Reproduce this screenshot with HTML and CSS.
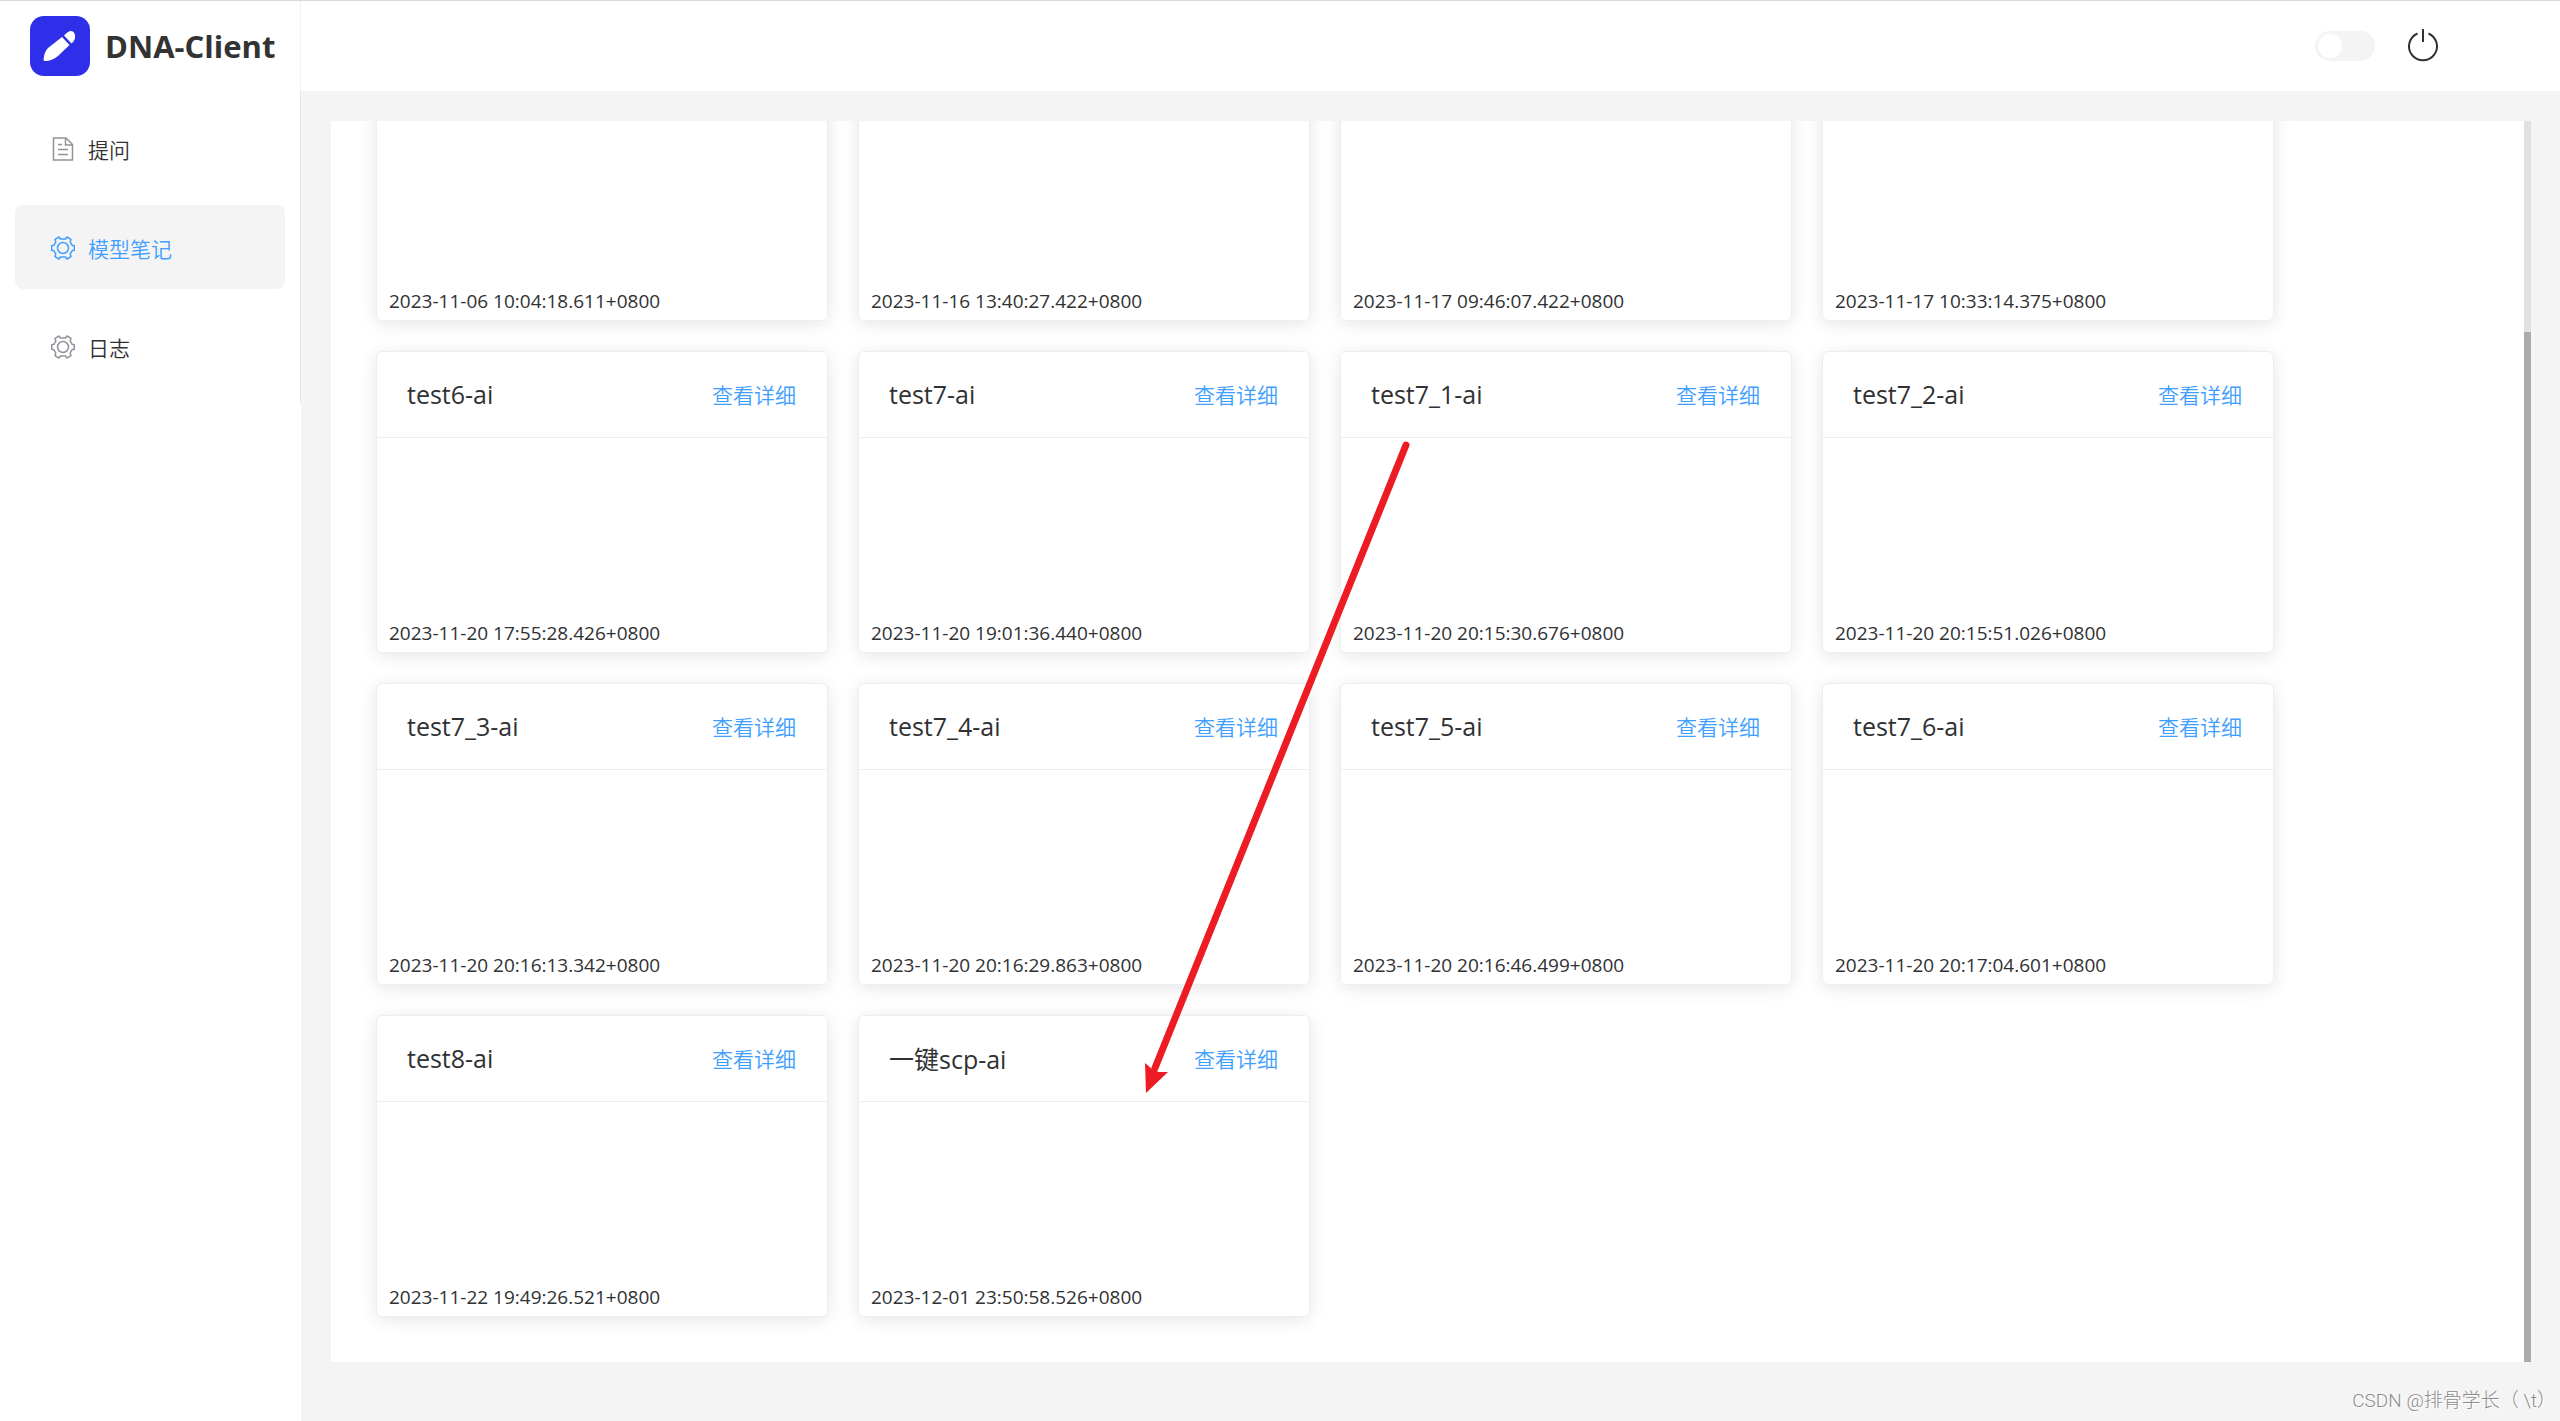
FILE: index.html
```html
<!DOCTYPE html>
<html lang="zh-CN">
<head>
<meta charset="utf-8">
<title>DNA-Client</title>
<link rel="stylesheet" href="styles.css">
</head>
<body>
<svg class="sprite" aria-hidden="true">
  <symbol id="gear" viewBox="0 0 24 24">
    <path d="M8 1 L9.500 3 H14.500 L16 1 L20 3.300 L19.200 6 L21 9.200 L23.300 9.700 V14.300 L21 14.800 L19.200 18 L20 20.700 L16 23 L14.500 21 H9.500 L8 23 L4 20.700 L4.800 18 L3 14.800 L0.700 14.300 V9.700 L3 9.200 L4.800 6 L4 3.300 Z" fill="none" stroke="currentColor" stroke-width="1.500" stroke-linejoin="round"/>
    <circle cx="12" cy="12" r="5.500" fill="none" stroke="currentColor" stroke-width="1.500"/>
  </symbol>
  <symbol id="doc" viewBox="0 0 24 24">
    <path d="M2.500 1 H15 L21.500 7.500 V23 H2.500 Z M14.500 1 V8 H21.500 M7 7.500 H11 M7 12.500 H17 M7 17.500 H17" fill="none" stroke="currentColor" stroke-width="1.500"/>
  </symbol>
</svg>
<div class="app">
  <aside class="sidebar">
    <div class="brand">
      <svg class="logo" viewBox="0 0 60 60" aria-hidden="true">
        <rect width="60" height="60" rx="14" fill="#2f2fe9"/>
        <path d="M13.500 44 Q14 36 18 32 L32 21 L39.500 29 L28 40 Q22 45 15 45 Q13.500 45 13.500 44 Z M35 18.500 Q40 13 43.500 16 Q47 20 43.500 25.500 L41.500 27.500 L34 19.500 Z" fill="#fff"/>
      </svg>
      <span class="brand-name">DNA-Client</span>
    </div>
    <nav class="menu">
      <a class="menu-item" href="#ask"><svg class="icon" aria-hidden="true"><use href="#doc"/></svg>提问</a>
      <a class="menu-item active" href="#notes"><svg class="icon" aria-hidden="true"><use href="#gear"/></svg>模型笔记</a>
      <a class="menu-item" href="#logs"><svg class="icon" aria-hidden="true"><use href="#gear"/></svg>日志</a>
    </nav>
  </aside>
  <div class="page">
    <header class="topbar">
      <input class="switch" type="checkbox" role="switch" aria-label="主题">
      <button class="power" type="button" aria-label="退出">
        <svg viewBox="0 0 36 36" aria-hidden="true"><path d="M12.500 5.500 A14 14 0 1 0 23.500 5.500 M18 1 V14" fill="none" stroke="currentColor" stroke-width="2"/></svg>
      </button>
    </header>
    <main class="main">
      <div class="panel">
        <div class="viewport">
          <div class="cards">
            <article class="card"><time>2023-11-06 10:04:18.611+0800</time></article>
            <article class="card"><time>2023-11-16 13:40:27.422+0800</time></article>
            <article class="card"><time>2023-11-17 09:46:07.422+0800</time></article>
            <article class="card"><time>2023-11-17 10:33:14.375+0800</time></article>
            <article class="card"><header class="card-head"><h2>test6-ai</h2><button type="button">查看详细</button></header><time>2023-11-20 17:55:28.426+0800</time></article>
            <article class="card"><header class="card-head"><h2>test7-ai</h2><button type="button">查看详细</button></header><time>2023-11-20 19:01:36.440+0800</time></article>
            <article class="card"><header class="card-head"><h2>test7_1-ai</h2><button type="button">查看详细</button></header><time>2023-11-20 20:15:30.676+0800</time></article>
            <article class="card"><header class="card-head"><h2>test7_2-ai</h2><button type="button">查看详细</button></header><time>2023-11-20 20:15:51.026+0800</time></article>
            <article class="card"><header class="card-head"><h2>test7_3-ai</h2><button type="button">查看详细</button></header><time>2023-11-20 20:16:13.342+0800</time></article>
            <article class="card"><header class="card-head"><h2>test7_4-ai</h2><button type="button">查看详细</button></header><time>2023-11-20 20:16:29.863+0800</time></article>
            <article class="card"><header class="card-head"><h2>test7_5-ai</h2><button type="button">查看详细</button></header><time>2023-11-20 20:16:46.499+0800</time></article>
            <article class="card"><header class="card-head"><h2>test7_6-ai</h2><button type="button">查看详细</button></header><time>2023-11-20 20:17:04.601+0800</time></article>
            <article class="card"><header class="card-head"><h2>test8-ai</h2><button type="button">查看详细</button></header><time>2023-11-22 19:49:26.521+0800</time></article>
            <article class="card"><header class="card-head"><h2>一键scp-ai</h2><button type="button">查看详细</button></header><time>2023-12-01 23:50:58.526+0800</time></article>
            <svg class="arrow" viewBox="0 0 280 670" aria-hidden="true">
              <path d="M266 15 L15 638" stroke="#ed1c24" stroke-width="7" stroke-linecap="round"/>
              <path d="M5 633 L12 639 L19 642 L28 642 L6 663 Z" fill="#ed1c24"/>
            </svg>
          </div>
        </div>
        <div class="track" aria-hidden="true"><div class="thumb"></div></div>
      </div>
    </main>
    <footer class="credit">CSDN @排骨学长（ \t）</footer>
  </div>
</div>
</body>
</html>
```
FILE: styles.css
```css
* { box-sizing: border-box; }

body {
  margin: 0;
  color: #303133;
  background: #fff;
  font-family: "Open Sans", "Noto Sans CJK SC", sans-serif;
  font-size: 21px;
}

button { font: inherit; border: 0; padding: 0; background: none; color: inherit; }

.sprite { display: none; }

.app {
  display: flex;
  height: 100vh;
  border-top: 1px solid #d9d9d9;
}

.sidebar { flex: 0 0 301px; }

.brand {
  display: flex;
  align-items: center;
  gap: 15px;
  height: 90px;
  padding-left: 30px;
  border-right: 1px solid #f2f2f2;
}

.logo { width: 60px; height: 60px; }
.brand-name { font-size: 31px; font-weight: 700; color: #333; white-space: nowrap; }

.menu {
  display: flex;
  flex-direction: column;
  gap: 15px;
  padding: 15px;
  border-right: 1px solid #e6e6e6;
}

.menu-item {
  display: flex;
  align-items: center;
  gap: 13px;
  height: 84px;
  padding: 2px 0 0 36px;
  border-radius: 8px;
  color: #303133;
  text-decoration: none;
  font-weight: 350;
}

.icon { width: 24px; height: 24px; color: #909399; }
.active { background: #f4f4f4; color: #409eff; }
.active .icon { color: #409eff; }

.page {
  display: flex;
  flex: 1;
  flex-direction: column;
  min-width: 0;
  background: #f4f4f4;
}

.topbar {
  display: flex;
  flex: 0 0 90px;
  align-items: center;
  justify-content: flex-end;
  gap: 30px;
  padding-right: 119px;
  background: #fff;
}

.switch {
  appearance: none;
  width: 60px;
  height: 30px;
  margin: 0;
  padding: 3px;
  border-radius: 15px;
  background: #f4f4f4;
}

.switch::before {
  content: "";
  display: block;
  width: 24px;
  height: 24px;
  border-radius: 50%;
  background: #fff;
}

.power { width: 36px; height: 36px; }
.power svg { display: block; width: 36px; height: 36px; }

.main {
  display: flex;
  flex: 1;
  min-height: 0;
  padding: 30px 29px 0 30px;
}

.panel { display: flex; flex: 1; background: #fff; }

.viewport {
  display: flex;
  flex: 1;
  flex-direction: column;
  justify-content: flex-end;
  overflow: hidden;
  padding: 0 45px 45px;
}

.cards {
  position: relative;
  display: grid;
  grid-template-columns: repeat(auto-fill, 452px);
  grid-auto-rows: 302px;
  gap: 30px;
}

.card {
  display: flex;
  flex-direction: column;
  border: 1px solid #ebeef5;
  border-radius: 6px;
  background: #fff;
  box-shadow: 0 3px 18px rgba(0, 0, 0, 0.1);
}

.card-head {
  display: flex;
  align-items: center;
  justify-content: space-between;
  height: 86px;
  padding: 0 31px 2px 30px;
  border-bottom: 1px solid #ebeef5;
}

.card-head h2 { margin: 0; font-size: 25px; font-weight: 400; }
.card-head button { color: #409eff; font-weight: 350; }

.card time {
  margin-top: auto;
  padding: 0 12px 4px;
  font-size: 19px;
  line-height: 30px;
}

.arrow { position: absolute; left: 764px; top: 411px; width: 280px; height: 670px; }

.track { display: flex; flex: 0 0 7px; flex-direction: column; justify-content: flex-end; background: #e1e1e1; }
.thumb { height: 83%; background: #ababab; }

.credit {
  flex: 0 0 59px;
  padding: 24px 4px 0 0;
  text-align: right;
  color: #8c8c8c;
  font-family: Roboto, "Noto Sans CJK SC", sans-serif;
  font-size: 19px;
  font-weight: 300;
  line-height: 30px;
  text-shadow: 1px 1px 0 #fff;
}
```
